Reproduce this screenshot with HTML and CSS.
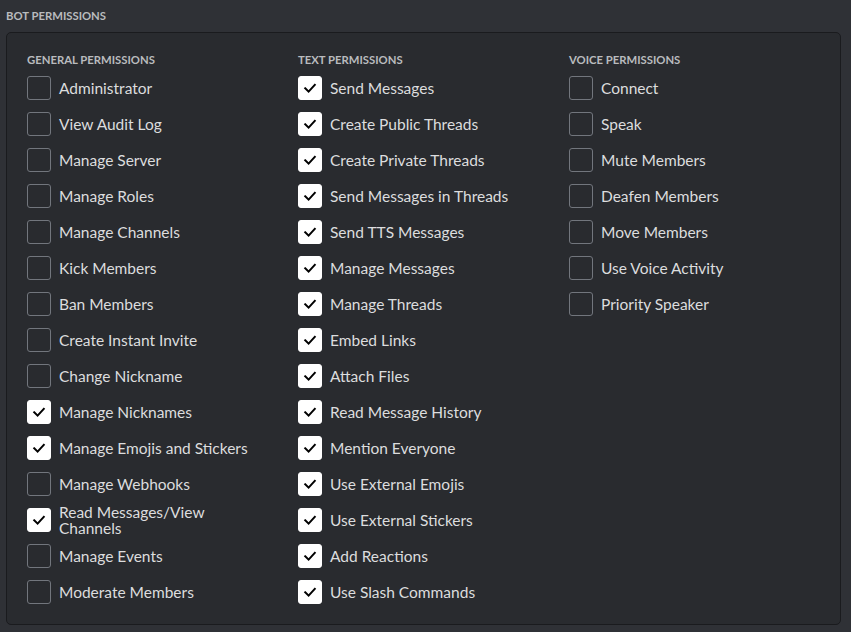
FILE: index.html
```html
<!DOCTYPE html>
<html>
<head>
<meta charset="utf-8">
<link rel="stylesheet" href="styles.css">
</head>
<body>
<div class="page">
  <h2 class="title">Bot Permissions</h2>
  <div class="panel">
    <div class="col">
      <h3 class="col-title">General Permissions</h3>
      <ul class="list">
        <li class="item"><span class="box"></span><span class="label">Administrator</span></li>
        <li class="item"><span class="box"></span><span class="label">View Audit Log</span></li>
        <li class="item"><span class="box"></span><span class="label">Manage Server</span></li>
        <li class="item"><span class="box"></span><span class="label">Manage Roles</span></li>
        <li class="item"><span class="box"></span><span class="label">Manage Channels</span></li>
        <li class="item"><span class="box"></span><span class="label">Kick Members</span></li>
        <li class="item"><span class="box"></span><span class="label">Ban Members</span></li>
        <li class="item"><span class="box"></span><span class="label">Create Instant Invite</span></li>
        <li class="item"><span class="box"></span><span class="label">Change Nickname</span></li>
        <li class="item"><span class="box checked"><svg viewBox="0 0 24 24"><path d="M7.2 12.3 L10.6 15.6 L16.8 8.8"/></svg></span><span class="label">Manage Nicknames</span></li>
        <li class="item"><span class="box checked"><svg viewBox="0 0 24 24"><path d="M7.2 12.3 L10.6 15.6 L16.8 8.8"/></svg></span><span class="label">Manage Emojis and Stickers</span></li>
        <li class="item"><span class="box"></span><span class="label">Manage Webhooks</span></li>
        <li class="item"><span class="box checked"><svg viewBox="0 0 24 24"><path d="M7.2 12.3 L10.6 15.6 L16.8 8.8"/></svg></span><span class="label">Read Messages/View Channels</span></li>
        <li class="item"><span class="box"></span><span class="label">Manage Events</span></li>
        <li class="item"><span class="box"></span><span class="label">Moderate Members</span></li>
      </ul>
    </div>
    <div class="col">
      <h3 class="col-title">Text Permissions</h3>
      <ul class="list">
        <li class="item"><span class="box checked"><svg viewBox="0 0 24 24"><path d="M7.2 12.3 L10.6 15.6 L16.8 8.8"/></svg></span><span class="label">Send Messages</span></li>
        <li class="item"><span class="box checked"><svg viewBox="0 0 24 24"><path d="M7.2 12.3 L10.6 15.6 L16.8 8.8"/></svg></span><span class="label">Create Public Threads</span></li>
        <li class="item"><span class="box checked"><svg viewBox="0 0 24 24"><path d="M7.2 12.3 L10.6 15.6 L16.8 8.8"/></svg></span><span class="label">Create Private Threads</span></li>
        <li class="item"><span class="box checked"><svg viewBox="0 0 24 24"><path d="M7.2 12.3 L10.6 15.6 L16.8 8.8"/></svg></span><span class="label">Send Messages in Threads</span></li>
        <li class="item"><span class="box checked"><svg viewBox="0 0 24 24"><path d="M7.2 12.3 L10.6 15.6 L16.8 8.8"/></svg></span><span class="label">Send TTS Messages</span></li>
        <li class="item"><span class="box checked"><svg viewBox="0 0 24 24"><path d="M7.2 12.3 L10.6 15.6 L16.8 8.8"/></svg></span><span class="label">Manage Messages</span></li>
        <li class="item"><span class="box checked"><svg viewBox="0 0 24 24"><path d="M7.2 12.3 L10.6 15.6 L16.8 8.8"/></svg></span><span class="label">Manage Threads</span></li>
        <li class="item"><span class="box checked"><svg viewBox="0 0 24 24"><path d="M7.2 12.3 L10.6 15.6 L16.8 8.8"/></svg></span><span class="label">Embed Links</span></li>
        <li class="item"><span class="box checked"><svg viewBox="0 0 24 24"><path d="M7.2 12.3 L10.6 15.6 L16.8 8.8"/></svg></span><span class="label">Attach Files</span></li>
        <li class="item"><span class="box checked"><svg viewBox="0 0 24 24"><path d="M7.2 12.3 L10.6 15.6 L16.8 8.8"/></svg></span><span class="label">Read Message History</span></li>
        <li class="item"><span class="box checked"><svg viewBox="0 0 24 24"><path d="M7.2 12.3 L10.6 15.6 L16.8 8.8"/></svg></span><span class="label">Mention Everyone</span></li>
        <li class="item"><span class="box checked"><svg viewBox="0 0 24 24"><path d="M7.2 12.3 L10.6 15.6 L16.8 8.8"/></svg></span><span class="label">Use External Emojis</span></li>
        <li class="item"><span class="box checked"><svg viewBox="0 0 24 24"><path d="M7.2 12.3 L10.6 15.6 L16.8 8.8"/></svg></span><span class="label">Use External Stickers</span></li>
        <li class="item"><span class="box checked"><svg viewBox="0 0 24 24"><path d="M7.2 12.3 L10.6 15.6 L16.8 8.8"/></svg></span><span class="label">Add Reactions</span></li>
        <li class="item"><span class="box checked"><svg viewBox="0 0 24 24"><path d="M7.2 12.3 L10.6 15.6 L16.8 8.8"/></svg></span><span class="label">Use Slash Commands</span></li>
      </ul>
    </div>
    <div class="col">
      <h3 class="col-title">Voice Permissions</h3>
      <ul class="list">
        <li class="item"><span class="box"></span><span class="label">Connect</span></li>
        <li class="item"><span class="box"></span><span class="label">Speak</span></li>
        <li class="item"><span class="box"></span><span class="label">Mute Members</span></li>
        <li class="item"><span class="box"></span><span class="label">Deafen Members</span></li>
        <li class="item"><span class="box"></span><span class="label">Move Members</span></li>
        <li class="item"><span class="box"></span><span class="label">Use Voice Activity</span></li>
        <li class="item"><span class="box"></span><span class="label">Priority Speaker</span></li>
      </ul>
    </div>
  </div>
</div>
</body>
</html>
```

FILE: styles.css
```css
html, body {
  margin: 0;
  padding: 0;
  background: #2f3136;
}
body {
  font-family: Lato, "Noto Sans", sans-serif;
  color: #dcddde;
}
.page {
  padding: 8px 10px 0 6px;
}
.title {
  margin: 0 0 8px 0;
  font-size: 11.3px;
  line-height: 16px;
  font-weight: 700;
  text-transform: uppercase;
  color: #b9bbbe;
}
.panel {
  width: 835px;
  box-sizing: border-box;
  background: #292b2f;
  border: 1px solid #1a1b1e;
  border-radius: 5px;
  padding: 19px 20px 20px 20px;
  display: grid;
  grid-template-columns: repeat(3, 1fr);
  column-gap: 20px;
}
.col-title {
  margin: 0 0 8px 0;
  font-size: 11.3px;
  line-height: 16px;
  font-weight: 700;
  text-transform: uppercase;
  color: #b9bbbe;
}
.list {
  list-style: none;
  margin: 0;
  padding: 0;
  display: flex;
  flex-direction: column;
  gap: 12px;
}
.item {
  display: flex;
  align-items: center;
  height: 24px;
}
.box {
  flex: 0 0 auto;
  width: 24px;
  height: 24px;
  box-sizing: border-box;
  border: 1px solid #72767d;
  border-radius: 3px;
  display: flex;
  align-items: center;
  justify-content: center;
}
.box.checked {
  background: #ffffff;
  border-color: #ffffff;
}
.box svg {
  width: 24px;
  height: 24px;
  flex: 0 0 auto;
}
.box svg path {
  fill: none;
  stroke: #000000;
  stroke-width: 2;
  stroke-linecap: square;
}
.label {
  margin-left: 8px;
  max-width: 200px;
  font-size: 15.5px;
  line-height: 16px;
  color: #dcddde;
}
```
